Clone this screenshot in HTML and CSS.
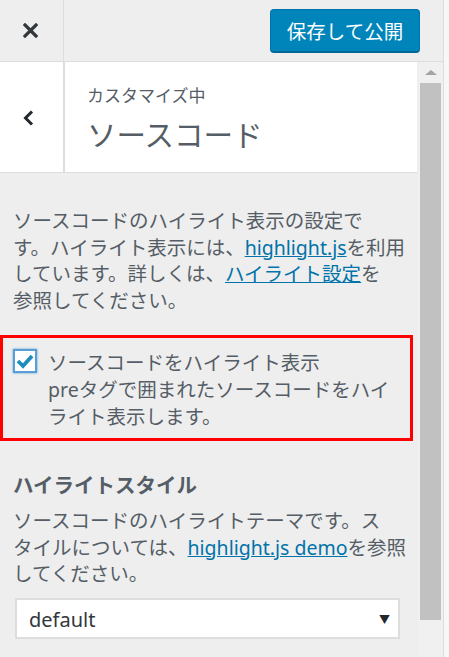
FILE: index.html
```html
<!DOCTYPE html>
<html lang="ja">

<head>
	<meta charset="UTF-8">
	<meta name="viewport" content="width=device-width, initial-scale=1.0">
	<title>ソースコード</title>
	<link rel="stylesheet" href="styles.css">
</head>

<body>

	<div class="panel">
		<div class="topbar">
			<div class="close">
				<svg width="15" height="15" viewBox="0 0 15 15">
					<path d="M2 2 L13 13 M13 2 L2 13" stroke="#32373c" stroke-width="3.2" stroke-linecap="square" />
				</svg>
			</div>
			<button class="publish" type="button">保存して公開</button>
		</div>

		<div class="main">
			<div class="content">
				<div class="section-title">
					<div class="back">
						<svg width="12" height="18" viewBox="0 0 12 18">
							<path d="M10 2.5 L3.5 9 L10 15.5" fill="none" stroke="#23282d" stroke-width="3" />
						</svg>
					</div>
					<div class="title">
						<span class="title-sub">カスタマイズ中</span>
						<span class="title-main">ソースコード</span>
					</div>
				</div>

				<div class="controls">
					<p class="desc">ソースコードのハイライト表示の設定で<br>す。ハイライト表示には、<a href="#">highlight.js</a>を利用<br>しています。詳しくは、<a href="#">ハイライト設定</a>を<br>参照してください。</p>

					<div class="highlight-box">
						<span class="check">
							<svg width="18" height="16" viewBox="0 0 18 16">
								<path d="M2 8 L7 13 L16 3" fill="none" stroke="#1e8cbe" stroke-width="3.8" />
							</svg>
						</span>
						<div class="check-text">
							ソースコードをハイライト表示<br>
							preタグで囲まれたソースコードをハイ<br>ライト表示します。
						</div>
					</div>

					<h3 class="control-title">ハイライトスタイル</h3>
					<p class="desc desc-small">ソースコードのハイライトテーマです。ス<br>タイルについては、<a href="#">highlight.js demo</a>を参照<br>してください。</p>

					<div class="select">
						<span>default</span>
						<span class="arrow">▼</span>
					</div>
				</div>
			</div>

			<div class="scrollbar">
				<div class="scroll-up"></div>
				<div class="thumb"></div>
			</div>
		</div>
	</div>

</body>

</html>
```
FILE: styles.css
```css
body {
	margin: 0;
	background-color: #f7f7f7;
	font-family: 'Noto Sans', 'Noto Sans CJK JP', sans-serif;
	color: #555d66;
	height: 657px;
	overflow: hidden;
}

.panel {
	width: 443px;
	height: 657px;
	background-color: #eee;
	border-right: 1px solid #ddd;
	display: flex;
	flex-direction: column;
}

.topbar {
	height: 61px;
	border-bottom: 1px solid #ddd;
	display: flex;
	align-items: center;
	flex-shrink: 0;
}

.close {
	width: 64px;
	height: 61px;
	box-sizing: border-box;
	border-right: 1px solid #ddd;
	display: flex;
	align-items: center;
	justify-content: center;
	padding-right: 3px;
}

.publish {
	margin-left: auto;
	margin-right: 23px;
	margin-top: 1px;
	width: 150px;
	height: 44px;
	background-color: #0085ba;
	color: white;
	border: 1px solid #0073aa;
	border-bottom: 2px solid #006799;
	border-radius: 4px;
	font-family: 'Noto Sans CJK JP', sans-serif;
	font-size: 19.5px;
	padding: 0;
}

.main {
	flex: 1;
	display: flex;
	min-height: 0;
}

.content {
	width: 418px;
}

.section-title {
	height: 110px;
	display: flex;
	border-bottom: 1px solid #ddd;
	margin-right: 1px;
}

.back {
	width: 65px;
	box-sizing: border-box;
	background-color: white;
	border-right: 2px solid #ddd;
	display: flex;
	align-items: center;
	justify-content: center;
	padding: 2px 8px 0 0;
}

.title {
	flex: 1;
	background-color: white;
	display: flex;
	flex-direction: column;
	padding: 22px 0 0 22px;
}

.title-sub {
	font-size: 17px;
	line-height: 24px;
}

.title-main {
	font-size: 29.5px;
	line-height: 40px;
	margin-top: 7px;
}

.controls {
	padding-left: 13px;
	width: 400px;
}

.desc {
	font-size: 19.5px;
	line-height: 26.5px;
	margin: 35px 0 0;
	white-space: nowrap;
}

a {
	color: #0073aa;
	text-decoration: underline;
}

.highlight-box {
	margin: 21px 0 0 -13px;
	width: 413px;
	box-sizing: border-box;
	border: 3px solid #f00;
	padding: 11px 9px 8px 10px;
	display: flex;
	gap: 11px;
}

.check {
	width: 24px;
	height: 24px;
	box-sizing: border-box;
	flex-shrink: 0;
	background-color: white;
	border: 2px solid #5b9dd9;
	box-shadow: 0 0 2px rgba(30, 140, 190, 0.8);
	display: flex;
	align-items: center;
	justify-content: center;
}

.check-text {
	font-size: 19.5px;
	line-height: 27px;
	white-space: nowrap;
}

.control-title {
	font-size: 20.5px;
	line-height: 26px;
	font-weight: 700;
	margin: 31px 0 0;
	color: #555d66;
}

.desc-small {
	margin-top: 10px;
}

.select {
	margin: 10px 0 0 2px;
	width: 385px;
	height: 41px;
	box-sizing: border-box;
	background-color: white;
	border: 2px solid #ddd;
	display: flex;
	align-items: center;
	padding: 2px 8px 0 12px;
	font-size: 20px;
	color: #32373c;
}

.arrow {
	margin-left: auto;
	font-size: 11px;
	color: #23282d;
}

.scrollbar {
	width: 25px;
	background-color: #f0f0f0;
	display: flex;
	flex-direction: column;
	align-items: center;
}

.scroll-up {
	margin-top: 8px;
	width: 0;
	height: 0;
	border-left: 6px solid transparent;
	border-right: 6px solid transparent;
	border-bottom: 5px solid #a3a3a3;
}

.thumb {
	margin-top: 8px;
	width: 21px;
	height: 537px;
	background-color: #c1c1c1;
}
```
